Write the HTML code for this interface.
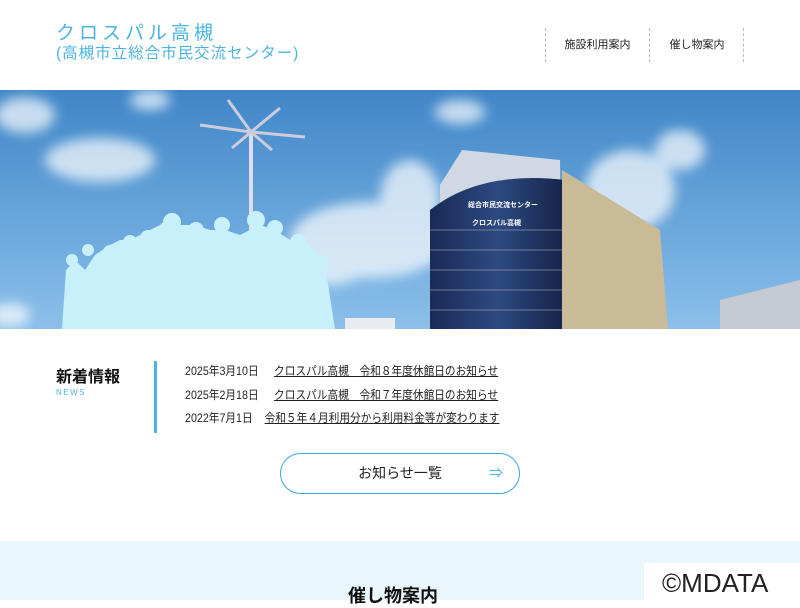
<!DOCTYPE html>
<html><head><meta charset="utf-8"><style>
*{margin:0;padding:0;box-sizing:border-box}
body{width:800px;height:600px;overflow:hidden;background:#fff;font-family:"Liberation Sans","Noto Sans CJK JP",sans-serif;position:relative}
.t1{position:absolute;left:56px;top:18px;font-size:19px;color:#4cb4e0;letter-spacing:4px}
.t2{position:absolute;left:56px;top:41px;font-size:15.5px;color:#4cb4e0;letter-spacing:1px}
.nav{position:absolute;top:28px;height:34px;border-left:1px dashed #bbb;font-size:11px;color:#222;line-height:34px;text-align:center}
.hero{position:absolute;left:0;top:90px;width:800px;height:239px}
.nt{position:absolute;left:56px;top:363px;font-size:16px;font-weight:bold;color:#111}
.nn{position:absolute;left:56px;top:388px;font-size:8px;color:#4cb4e0;letter-spacing:1.5px}
.bar{position:absolute;left:154px;top:361px;width:3px;height:72px;background:#4cb4e0}
.row{position:absolute;left:185px;font-size:12px;color:#222;transform:scaleX(0.89);transform-origin:left}
.row u{margin-left:14px;text-decoration:underline}
.btn{position:absolute;left:280px;top:453px;width:240px;height:41px;border:1.5px solid #38a8e6;border-radius:21px;font-size:14px;color:#222;text-align:center;line-height:38px}
.btn span{position:absolute;right:16px;top:0;color:#4cb4e0}
.sec{position:absolute;left:0;top:541px;width:800px;height:59px;background:#e9f6fb}
.st{position:absolute;left:348px;top:582px;font-size:18px;font-weight:bold;color:#111}
.md{position:absolute;left:644px;top:563px;width:156px;height:37px;background:#fff;font-size:26px;color:#222;padding-left:18px;line-height:40px}
</style></head><body>
<div class="t1">クロスパル高槻</div>
<div class="t2">(高槻市立総合市民交流センター)</div>
<div class="nav" style="left:545px;width:104px">施設利用案内</div>
<div class="nav" style="left:649px;width:95px">催し物案内</div>
<div class="nav" style="left:743px;width:1px"></div>
<svg class="hero" viewBox="0 0 800 239">
<defs><linearGradient id="sk" x1="0" y1="0" x2="0" y2="1"><stop offset="0" stop-color="#3f86c8"/><stop offset="1" stop-color="#8cc0ea"/></linearGradient>
<linearGradient id="bl" x1="0" y1="0" x2="1" y2="0"><stop offset="0" stop-color="#1a2a55"/><stop offset="0.5" stop-color="#2d4a82"/><stop offset="1" stop-color="#152348"/></linearGradient>
<filter id="bf"><feGaussianBlur stdDeviation="6"/></filter></defs>
<rect width="800" height="239" fill="url(#sk)"/>
<g fill="#fff" opacity="0.7" filter="url(#bf)">
<ellipse cx="25" cy="25" rx="30" ry="18"/><ellipse cx="100" cy="70" rx="55" ry="22"/><ellipse cx="150" cy="10" rx="20" ry="10"/>
<ellipse cx="370" cy="150" rx="80" ry="38"/><ellipse cx="330" cy="170" rx="40" ry="25"/><ellipse cx="410" cy="110" rx="30" ry="40"/>
<ellipse cx="630" cy="100" rx="45" ry="40"/><ellipse cx="680" cy="60" rx="25" ry="20"/><ellipse cx="460" cy="22" rx="25" ry="12"/>
<ellipse cx="10" cy="225" rx="20" ry="12"/></g>
<rect x="249" y="40" width="4" height="199" fill="#dde"/>
<g stroke="#ccd" stroke-width="3"><line x1="251" y1="42" x2="200" y2="35"/><line x1="251" y1="42" x2="305" y2="47"/><line x1="251" y1="42" x2="228" y2="10"/><line x1="251" y1="42" x2="280" y2="18"/><line x1="251" y1="42" x2="232" y2="58"/><line x1="251" y1="42" x2="272" y2="60"/></g>
<g fill="#c8f0fa"><path d="M62 239 L66 180 L75 170 L85 180 L95 165 L110 155 L120 150 L130 150 L140 145 L160 135 L170 125 L180 135 L195 135 L210 140 L225 140 L240 145 L260 135 L275 140 L290 150 L310 155 L325 175 L335 239 Z"/>
<circle cx="72" cy="170" r="6"/><circle cx="88" cy="160" r="6"/><circle cx="110" cy="162" r="7"/><circle cx="130" cy="152" r="7"/><circle cx="148" cy="148" r="8"/><circle cx="172" cy="132" r="9"/><circle cx="196" cy="140" r="8"/><circle cx="222" cy="135" r="8"/><circle cx="256" cy="130" r="9"/><circle cx="275" cy="138" r="8"/><circle cx="298" cy="152" r="8"/><circle cx="322" cy="172" r="7"/></g>
<path d="M440 95 L462 60 L560 70 L562 239 L440 239 Z" fill="#d0d8e4"/>
<path d="M430 120 Q480 80 565 90 L565 239 L430 239 Z" fill="url(#bl)"/>
<g stroke="#9ab" stroke-width="1" opacity="0.6">
<line x1="430" y1="140" x2="565" y2="140"/><line x1="430" y1="160" x2="565" y2="160"/><line x1="430" y1="180" x2="565" y2="180"/><line x1="430" y1="200" x2="565" y2="200"/><line x1="430" y1="220" x2="565" y2="220"/></g>
<text x="468" y="117" font-size="7" fill="#fff" font-weight="bold">総合市民交流センター</text>
<text x="472" y="135" font-size="7" fill="#fff" font-weight="bold">クロスパル高槻</text>
<path d="M562 80 L660 140 L668 239 L562 239 Z" fill="#c9bb98"/>
<path d="M720 210 L800 190 L800 239 L720 239 Z" fill="#c6cad2"/>
<rect x="345" y="228" width="50" height="11" fill="#e8ecf0"/>
</svg>
<div class="nt">新着情報</div>
<div class="nn">NEWS</div>
<div class="bar"></div>
<div class="row" style="top:362px">2025年3月10日 <u>クロスパル高槻　令和８年度休館日のお知らせ</u></div>
<div class="row" style="top:386px">2025年2月18日 <u>クロスパル高槻　令和７年度休館日のお知らせ</u></div>
<div class="row" style="top:409px">2022年7月1日 <u style="margin-left:10px">令和５年４月利用分から利用料金等が変わります</u></div>
<div class="btn">お知らせ一覧<span>⇒</span></div>
<div class="sec"></div>
<div class="st">催し物案内</div>
<div class="md">©MDATA</div>
</body></html>
